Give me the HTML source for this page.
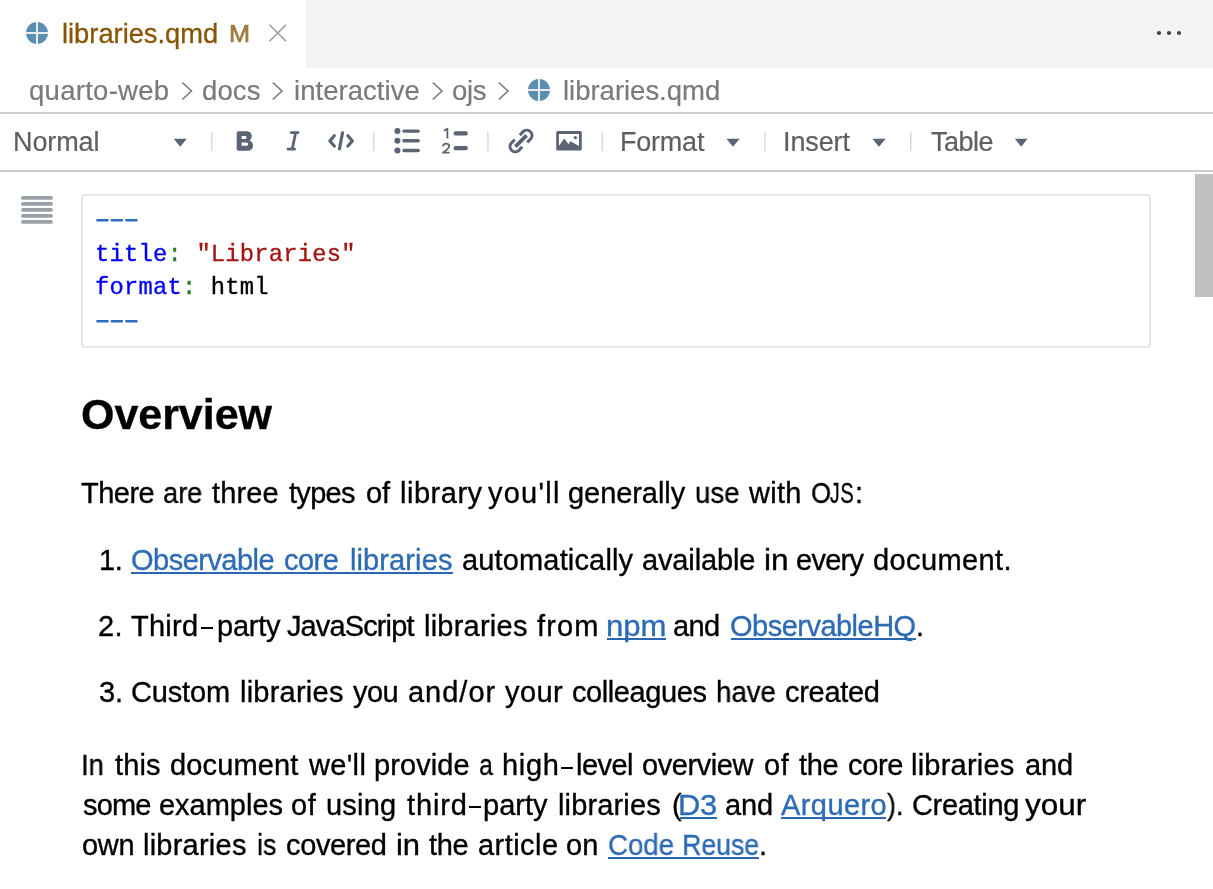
<!DOCTYPE html>
<html><head><meta charset="utf-8">
<style>
html,body{-webkit-font-smoothing:antialiased;margin:0;padding:0;background:#fff;width:1213px;height:889px;overflow:hidden;position:relative;font-family:"Liberation Sans",sans-serif;}
.t{position:absolute;white-space:pre;line-height:0;will-change:transform;-webkit-text-stroke:0.35px currentColor;}
.abs{position:absolute;}
.ui{-webkit-text-stroke:0.2px currentColor;}
.tabt{-webkit-text-stroke:0.3px currentColor;}
.mm{-webkit-text-stroke:0.7px currentColor;}
.ul{position:absolute;height:2px;background:#2b66b1;}
.sep{position:absolute;width:2px;background:#dcdcdc;}
.tri{position:absolute;width:0;height:0;border-left:6.5px solid transparent;border-right:6.5px solid transparent;border-top:8px solid #5b6474;}
</style></head><body>
<!-- tab bar -->
<div class="abs" style="left:306px;top:0;width:907px;height:68px;background:#f3f3f3;"></div>
<svg class="abs" style="left:0;top:0" width="1213" height="889" viewBox="0 0 1213 889">
  <!-- tab globe -->
  <circle cx="37" cy="33" r="11" fill="#5b8fb0"/>
  <rect x="36" y="22" width="2" height="22" fill="#e6eef4"/>
  <rect x="26" y="32" width="22" height="2" fill="#e6eef4"/>
  <!-- close x -->
  <path d="M269.5 24.8 L286 41.2 M286 24.8 L269.5 41.2" stroke="#9d9d9d" stroke-width="1.6"/>
  <!-- more dots -->
  <circle cx="1159" cy="33" r="2.1" fill="#424242"/>
  <circle cx="1169" cy="33" r="2.1" fill="#424242"/>
  <circle cx="1179" cy="33" r="2.1" fill="#424242"/>
  <!-- breadcrumb chevrons -->
  <g stroke="#7a7a7a" stroke-width="1.6" fill="none">
    <path d="M182.3 82.5 L191.5 91 L182.3 99.5"/>
    <path d="M272.8 82.5 L282 91 L272.8 99.5"/>
    <path d="M432.8 82.5 L442 91 L432.8 99.5"/>
    <path d="M498.8 82.5 L508 91 L498.8 99.5"/>
  </g>
  <!-- breadcrumb globe -->
  <circle cx="539" cy="90" r="11" fill="#5b8fb0"/>
  <rect x="538" y="79" width="2" height="22" fill="#e6eef4"/>
  <rect x="528" y="89" width="22" height="2" fill="#e6eef4"/>
  <!-- lines -->
  <rect x="0" y="112" width="1213" height="2" fill="#cfcfcf"/>
  <rect x="0" y="170" width="1213" height="2" fill="#cccccc"/>
  <!-- toolbar separators -->
  <g fill="#d9d9d9">
    <rect x="211" y="132" width="1.5" height="19"/>
    <rect x="373" y="132" width="1.5" height="19"/>
    <rect x="487.2" y="132" width="1.5" height="19"/>
    <rect x="601.5" y="132" width="1.5" height="19"/>
    <rect x="764.3" y="132" width="1.5" height="19"/>
    <rect x="910" y="132" width="1.5" height="19"/>
  </g>
  <!-- triangles -->
  <g fill="#5b6474">
    <path d="M173.7 138.7 L186.8 138.7 L180.25 146.8 Z"/>
    <path d="M726.4 138.7 L739.6 138.7 L733 146.8 Z"/>
    <path d="M872.4 138.7 L885.7 138.7 L879 146.8 Z"/>
    <path d="M1014.8 138.7 L1027.5 138.7 L1021.2 146.8 Z"/>
  </g>
  <!-- toolbar icons -->
  <g fill="#5b6474" stroke="none">
    <!-- Bold -->
    <path d="M238.5 131.2 L246 131.2 Q251.8 131.2 251.8 136.2 Q251.8 139 249.6 140.4 Q253 141.9 253 145.4 Q253 150.7 246.8 150.7 L238.5 150.7 Q236.7 150.7 236.7 148.9 L236.7 133 Q236.7 131.2 238.5 131.2 Z M241.6 136 L245.4 136 Q246.5 136 246.5 137.55 Q246.5 139.1 245.4 139.1 L241.6 139.1 Z M241.6 142.5 L246.8 142.5 Q248.1 142.5 248.1 144.15 Q248.1 145.8 246.8 145.8 L241.6 145.8 Z" fill-rule="evenodd"/>
  </g>
  <g stroke="#5b6474" stroke-linecap="round" fill="none">
    <!-- Italic -->
    <path d="M291.4 132.7 L298 132.7 M288 149.2 L294.6 149.2 M295.6 133 L292.2 149" stroke-width="2.8"/>
    <!-- code -->
    <path d="M334.3 135.8 L329.8 141 L334.3 146 M347.9 135.8 L352.4 141 L347.9 146" stroke-width="3.2" stroke-linejoin="round"/>
    <path d="M342.5 132.8 L339.5 148.8" stroke-width="3.2"/>
    <!-- bullet list lines -->
    <path d="M404 131.1 L418.2 131.1 M404 140.8 L418.2 140.8 M404 150.5 L418.2 150.5" stroke-width="3.4"/>
    <!-- numbered 1 2 -->
    <path d="M444 130.6 L447.4 128.8 L447.4 138.6" stroke-width="1.8" stroke-linecap="butt" stroke-linejoin="round"/>
    <path d="M442.9 146.3 Q443.2 143.6 446.1 143.6 Q449.2 143.6 449.2 146.2 Q449.2 147.8 446.9 149.6 L442.9 152.6 L449.6 152.6" stroke-width="1.8" stroke-linecap="butt" stroke-linejoin="round"/>
    <!-- link -->
    <path d="M519.8 135.1 L523.6 131.2 A5.3 5.3 0 0 1 531 138.6 L527.2 142.4" stroke-width="3" stroke-linecap="butt"/>
    <path d="M522.2 146.9 L518.4 150.8 A5.3 5.3 0 0 1 511 143.4 L514.8 139.6" stroke-width="3" stroke-linecap="butt"/>
    <path d="M515.4 146.6 L526.6 135.4" stroke-width="3.8" stroke-linecap="butt"/>
  </g>
  <g fill="#5b6474">
    <circle cx="397.4" cy="131.1" r="3"/>
    <circle cx="397.4" cy="140.8" r="3"/>
    <circle cx="397.4" cy="150.5" r="3"/>
    <rect x="453.6" y="131.3" width="14.2" height="4.3" rx="1.8"/>
    <rect x="453.6" y="146" width="14.2" height="4.3" rx="1.8"/>
    <!-- image -->
    <path d="M556.2 132.6 Q556.2 131.1 557.7 131.1 L580.3 131.1 Q581.8 131.1 581.8 132.6 L581.8 149.1 Q581.8 150.6 580.3 150.6 L557.7 150.6 Q556.2 150.6 556.2 149.1 Z M558.9 134.1 L558.9 147.9 L579 147.9 L579 134.1 Z" fill-rule="evenodd"/>
    <path d="M558.4 148.2 L558.4 146.6 L564.3 138.4 L568.5 144.2 L570.4 141.2 L579 145.9 L579 148 Z"/>
    <circle cx="575.4" cy="137.6" r="1.6"/>
  </g>
  <!-- scrollbar -->
  <rect x="1195" y="174" width="18" height="123" fill="#c1c1c1"/>
  <!-- hamburger -->
  <g stroke="#9aa0a8" stroke-width="3.8" stroke-linecap="round">
    <path d="M23 197.9 L51 197.9 M23 203.9 L51 203.9 M23 209.9 L51 209.9 M23 215.9 L51 215.9 M23 221.9 L51 221.9"/>
  </g>
  <!-- code box -->
  <rect x="82" y="194.9" width="1068" height="152" rx="2.5" ry="2.5" fill="none" stroke="#e3e3e3" stroke-width="1.8"/>
</svg>
<div class="t tabt" style="left:62.00px;top:34.14px;font-size:27.3px;color:#895503;letter-spacing:-0.006px;">libraries.qmd</div>
<div class="t mm" style="left:229.00px;top:34.45px;font-size:23.5px;color:#a27b45;transform:scaleX(1.0765);transform-origin:1.00px 0;">M</div>
<div class="t ui" style="left:29.00px;top:90.97px;font-size:27.5px;color:#7a7a7a;letter-spacing:0.279px;">quarto-web</div>
<div class="t ui" style="left:202.10px;top:90.97px;font-size:27.5px;color:#7a7a7a;letter-spacing:0.121px;">docs</div>
<div class="t ui" style="left:293.50px;top:90.97px;font-size:27.5px;color:#7a7a7a;letter-spacing:0.046px;">interactive</div>
<div class="t ui" style="left:452.10px;top:90.97px;font-size:27.5px;color:#7a7a7a;letter-spacing:-0.302px;">ojs</div>
<div class="t ui" style="left:563.30px;top:90.97px;font-size:27.5px;color:#7a7a7a;letter-spacing:-0.018px;">libraries.qmd</div>
<div class="t ui" style="left:12.50px;top:142.14px;font-size:27px;color:#5f5f5f;letter-spacing:-0.123px;">Normal</div>
<div class="t ui" style="left:620.30px;top:142.14px;font-size:27px;color:#5f5f5f;letter-spacing:-0.221px;">Format</div>
<div class="t ui" style="left:783.10px;top:142.14px;font-size:27px;color:#5f5f5f;letter-spacing:-0.105px;">Insert</div>
<div class="t ui" style="left:931.40px;top:142.14px;font-size:27px;color:#5f5f5f;letter-spacing:-0.483px;">Table</div>
<div class="t" style="left:81.30px;top:414.29px;font-size:43px;color:#000;letter-spacing:-0.041px;font-weight:700;">Overview</div>
<div class="t" style="left:81.20px;top:492.95px;font-size:29px;color:#000;letter-spacing:-0.532px;">There</div>
<div class="t" style="left:163.00px;top:492.95px;font-size:29px;color:#000;transform:scaleX(0.9350);transform-origin:1.00px 0;">are</div>
<div class="t" style="left:212.30px;top:492.95px;font-size:29px;color:#000;letter-spacing:0.157px;">three</div>
<div class="t" style="left:288.50px;top:492.95px;font-size:29px;color:#000;letter-spacing:-0.703px;">types</div>
<div class="t" style="left:365.90px;top:492.95px;font-size:29px;color:#000;letter-spacing:-0.128px;">of</div>
<div class="t" style="left:399.80px;top:492.95px;font-size:29px;color:#000;letter-spacing:0.524px;">library</div>
<div class="t" style="left:488.00px;top:492.95px;font-size:29px;color:#000;letter-spacing:1.233px;">you'll</div>
<div class="t" style="left:568.00px;top:492.95px;font-size:29px;color:#000;letter-spacing:-0.061px;">generally</div>
<div class="t" style="left:694.70px;top:492.95px;font-size:29px;color:#000;transform:scaleX(0.9478);transform-origin:1.00px 0;">use</div>
<div class="t" style="left:749.00px;top:492.95px;font-size:29px;color:#000;letter-spacing:0.286px;">with</div>
<div class="t" style="left:811.10px;top:492.95px;font-size:29px;color:#000;transform:scaleX(0.8810);transform-origin:1.00px 0;">O</div>
<div class="t" style="left:829.50px;top:492.95px;font-size:29px;color:#000;transform:scaleX(0.6615);transform-origin:0.00px 0;">J</div>
<div class="t" style="left:840.00px;top:492.95px;font-size:29px;color:#000;transform:scaleX(0.6889);transform-origin:1.00px 0;">S</div>
<div class="t" style="left:854.80px;top:492.95px;font-size:29px;color:#000;">:</div>
<div class="t" style="left:98.70px;top:559.95px;font-size:29px;color:#000;letter-spacing:-0.328px;">1.</div>
<div class="t" style="left:131.00px;top:559.95px;font-size:29px;color:#2c6bb5;letter-spacing:-0.519px;">Observable</div>
<div class="t" style="left:284.30px;top:559.95px;font-size:29px;color:#2c6bb5;letter-spacing:-0.529px;">core</div>
<div class="t" style="left:349.60px;top:559.95px;font-size:29px;color:#2c6bb5;letter-spacing:0.109px;">libraries</div>
<div class="t" style="left:461.90px;top:559.95px;font-size:29px;color:#000;letter-spacing:0.155px;">automatically</div>
<div class="t" style="left:642.40px;top:559.95px;font-size:29px;color:#000;letter-spacing:-0.130px;">available</div>
<div class="t" style="left:763.60px;top:559.95px;font-size:29px;color:#000;transform:scaleX(1.0908);transform-origin:1.00px 0;">in</div>
<div class="t" style="left:796.30px;top:559.95px;font-size:29px;color:#000;letter-spacing:-0.729px;">every</div>
<div class="t" style="left:873.00px;top:559.95px;font-size:29px;color:#000;letter-spacing:0.393px;">document.</div>
<div class="t" style="left:98.00px;top:625.95px;font-size:29px;color:#000;letter-spacing:0.372px;">2.</div>
<div class="t" style="left:131.20px;top:625.95px;font-size:29px;color:#000;letter-spacing:0.264px;">Third</div>
<div class="t" style="left:216.70px;top:625.95px;font-size:29px;color:#000;letter-spacing:-0.218px;">party</div>
<div class="t" style="left:287.00px;top:625.95px;font-size:29px;color:#000;letter-spacing:-0.881px;">JavaScript</div>
<div class="t" style="left:423.50px;top:625.95px;font-size:29px;color:#000;letter-spacing:0.234px;">libraries</div>
<div class="t" style="left:537.30px;top:625.95px;font-size:29px;color:#000;letter-spacing:1.152px;">from</div>
<div class="t" style="left:606.30px;top:625.95px;font-size:29px;color:#2c6bb5;transform:scaleX(1.0727);transform-origin:1.00px 0;">npm</div>
<div class="t" style="left:673.40px;top:625.95px;font-size:29px;color:#000;letter-spacing:-0.578px;">and</div>
<div class="t" style="left:729.80px;top:625.95px;font-size:29px;color:#2c6bb5;letter-spacing:-0.513px;">ObservableHQ</div>
<div class="t" style="left:915.50px;top:625.95px;font-size:29px;color:#000;">.</div>
<div class="t" style="left:98.50px;top:692.25px;font-size:29px;color:#000;letter-spacing:-0.128px;">3.</div>
<div class="t" style="left:130.90px;top:692.25px;font-size:29px;color:#000;letter-spacing:-0.151px;">Custom</div>
<div class="t" style="left:239.80px;top:692.25px;font-size:29px;color:#000;letter-spacing:0.234px;">libraries</div>
<div class="t" style="left:352.50px;top:692.25px;font-size:29px;color:#000;letter-spacing:-0.514px;">you</div>
<div class="t" style="left:407.70px;top:692.25px;font-size:29px;color:#000;letter-spacing:0.986px;">and/or</div>
<div class="t" style="left:505.10px;top:692.25px;font-size:29px;color:#000;letter-spacing:0.448px;">your</div>
<div class="t" style="left:571.60px;top:692.25px;font-size:29px;color:#000;letter-spacing:-0.417px;">colleagues</div>
<div class="t" style="left:716.30px;top:692.25px;font-size:29px;color:#000;transform:scaleX(0.9488);transform-origin:2.00px 0;">have</div>
<div class="t" style="left:785.30px;top:692.25px;font-size:29px;color:#000;letter-spacing:-0.300px;">created</div>
<div class="t" style="left:81.00px;top:764.95px;font-size:29px;color:#000;transform:scaleX(0.9356);transform-origin:2.00px 0;">In</div>
<div class="t" style="left:114.60px;top:764.95px;font-size:29px;color:#000;letter-spacing:0.124px;">this</div>
<div class="t" style="left:169.80px;top:764.95px;font-size:29px;color:#000;letter-spacing:0.143px;">document</div>
<div class="t" style="left:309.00px;top:764.95px;font-size:29px;color:#000;letter-spacing:0.337px;">we'll</div>
<div class="t" style="left:374.30px;top:764.95px;font-size:29px;color:#000;letter-spacing:0.086px;">provide</div>
<div class="t" style="left:479.00px;top:764.95px;font-size:29px;color:#000;transform:scaleX(0.8500);transform-origin:1.00px 0;">a</div>
<div class="t" style="left:501.70px;top:764.95px;font-size:29px;color:#000;letter-spacing:0.667px;">high</div>
<div class="t" style="left:576.20px;top:764.95px;font-size:29px;color:#000;letter-spacing:-0.525px;">level</div>
<div class="t" style="left:642.40px;top:764.95px;font-size:29px;color:#000;letter-spacing:-0.441px;">overview</div>
<div class="t" style="left:763.70px;top:764.95px;font-size:29px;color:#000;letter-spacing:0.572px;">of</div>
<div class="t" style="left:799.30px;top:764.95px;font-size:29px;color:#000;letter-spacing:-0.393px;">the</div>
<div class="t" style="left:847.80px;top:764.95px;font-size:29px;color:#000;letter-spacing:-0.362px;">core</div>
<div class="t" style="left:911.20px;top:764.95px;font-size:29px;color:#000;letter-spacing:0.221px;">libraries</div>
<div class="t" style="left:1024.80px;top:764.95px;font-size:29px;color:#000;letter-spacing:-0.078px;">and</div>
<div class="t" style="left:82.50px;top:804.95px;font-size:29px;color:#000;letter-spacing:-0.862px;">some</div>
<div class="t" style="left:158.60px;top:804.95px;font-size:29px;color:#000;letter-spacing:-0.016px;">examples</div>
<div class="t" style="left:291.00px;top:804.95px;font-size:29px;color:#000;letter-spacing:0.572px;">of</div>
<div class="t" style="left:325.60px;top:804.95px;font-size:29px;color:#000;letter-spacing:0.200px;">using</div>
<div class="t" style="left:406.60px;top:804.95px;font-size:29px;color:#000;letter-spacing:0.854px;">third</div>
<div class="t" style="left:483.40px;top:804.95px;font-size:29px;color:#000;letter-spacing:0.007px;">party</div>
<div class="t" style="left:558.10px;top:804.95px;font-size:29px;color:#000;letter-spacing:0.146px;">libraries</div>
<div class="t" style="left:671.50px;top:804.95px;font-size:29px;color:#000;">(</div>
<div class="t" style="left:678.00px;top:804.95px;font-size:29px;color:#2c6bb5;transform:scaleX(1.0606);transform-origin:2.00px 0;">D3</div>
<div class="t" style="left:725.00px;top:804.95px;font-size:29px;color:#000;letter-spacing:-0.128px;">and</div>
<div class="t" style="left:781.20px;top:804.95px;font-size:29px;color:#2c6bb5;letter-spacing:0.426px;">Arquero</div>
<div class="t" style="left:886.50px;top:804.95px;font-size:29px;color:#000;transform:scaleX(0.9197);transform-origin:0.00px 0;">).</div>
<div class="t" style="left:911.60px;top:804.95px;font-size:29px;color:#000;letter-spacing:-0.326px;">Creating</div>
<div class="t" style="left:1025.10px;top:804.95px;font-size:29px;color:#000;transform:scaleX(1.0853);transform-origin:0.00px 0;">your</div>
<div class="t" style="left:81.50px;top:844.55px;font-size:29px;color:#000;letter-spacing:-0.336px;">own</div>
<div class="t" style="left:143.30px;top:844.55px;font-size:29px;color:#000;letter-spacing:0.234px;">libraries</div>
<div class="t" style="left:257.10px;top:844.55px;font-size:29px;color:#000;transform:scaleX(0.9155);transform-origin:1.00px 0;">is</div>
<div class="t" style="left:286.00px;top:844.55px;font-size:29px;color:#000;letter-spacing:-0.374px;">covered</div>
<div class="t" style="left:395.90px;top:844.55px;font-size:29px;color:#000;transform:scaleX(1.0664);transform-origin:1.00px 0;">in</div>
<div class="t" style="left:429.00px;top:844.55px;font-size:29px;color:#000;letter-spacing:-0.393px;">the</div>
<div class="t" style="left:477.50px;top:844.55px;font-size:29px;color:#000;letter-spacing:0.445px;">article</div>
<div class="t" style="left:566.00px;top:844.55px;font-size:29px;color:#000;letter-spacing:0.072px;">on</div>
<div class="t" style="left:607.70px;top:844.55px;font-size:29px;color:#2c6bb5;transform:scaleX(0.9509);transform-origin:1.00px 0;">Code</div>
<div class="t" style="left:682.10px;top:844.55px;font-size:29px;color:#2c6bb5;transform:scaleX(0.9170);transform-origin:2.00px 0;">Reuse</div>
<div class="t" style="left:759.20px;top:844.55px;font-size:29px;color:#000;">.</div>
<!-- dashes -->
<div class="abs" style="left:201.4px;top:627px;width:11.9px;height:2.4px;background:#000;"></div>
<div class="abs" style="left:469.3px;top:805.6px;width:11.4px;height:2.4px;background:#000;"></div>
<div class="abs" style="left:561.2px;top:766.6px;width:11.9px;height:2.4px;background:#000;"></div>
<!-- underlines -->
<div class="ul" style="left:131px;top:572px;width:322px;"></div>
<div class="ul" style="left:607px;top:638px;width:59px;"></div>
<div class="ul" style="left:730.5px;top:638px;width:185px;"></div>
<div class="ul" style="left:679.5px;top:817px;width:37px;"></div>
<div class="ul" style="left:781px;top:817px;width:105px;"></div>
<div class="ul" style="left:607.7px;top:857px;width:151.4px;"></div>
<!-- code -->
<div class="t" style="left:94.5px;top:255.37px;font-family:'Liberation Mono',monospace;font-size:23.8px;letter-spacing:0.2px;color:#0000ff;">title<span style="color:#2a7d2e">:</span> <span style="color:#a31515">"Libraries"</span></div>
<div class="t" style="left:94.5px;top:288.47px;font-family:'Liberation Mono',monospace;font-size:23.8px;letter-spacing:0.2px;color:#0000ff;">format<span style="color:#2a7d2e">:</span> <span style="color:#000">html</span></div>
<svg class="abs" style="left:0;top:0" width="200" height="340">
<g fill="#2e6cbf">
<rect x="96.2" y="219" width="12.5" height="2.6" rx="1"/><rect x="110.6" y="219" width="12.5" height="2.6" rx="1"/><rect x="125.2" y="219" width="12.5" height="2.6" rx="1"/>
<rect x="96.2" y="320" width="12.5" height="2.6" rx="1"/><rect x="110.6" y="320" width="12.5" height="2.6" rx="1"/><rect x="125.2" y="320" width="12.5" height="2.6" rx="1"/>
</g></svg>
</body></html>
